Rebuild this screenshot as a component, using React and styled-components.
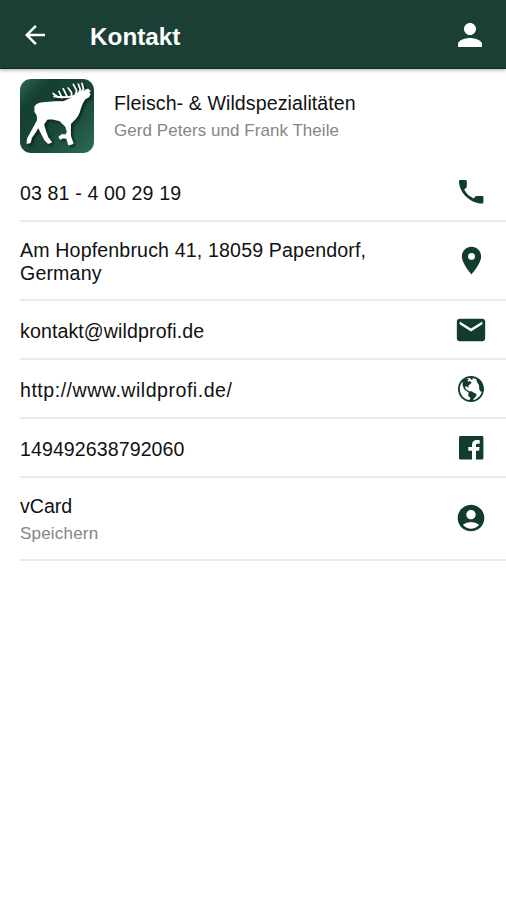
import styled, { createGlobalStyle } from 'styled-components';
import {
  MdArrowBack,
  MdEmail,
  MdAccountCircle,
  MdPerson,
  MdPlace,
} from 'react-icons/md';
import { IoMdGlobe } from 'react-icons/io';

function PhoneIcon() {
  return (
    <svg width="25" height="24" viewBox="0 0 25 24" fill="currentColor">
      <path d="M1.2 0H6.5Q7.8 0 7.8 1.2V6.3Q7.8 7.4 7 8L5.2 9.4C7.6 13.8 10.4 16.4 14.8 18.4L16 16.8Q16.6 15.9 17.8 15.9H23.2Q24.4 15.9 24.4 17V22.4Q24.4 23.5 23.2 23.5C11.5 23.2 .2 13.2 0 1.2Q0 0 1.2 0Z" />
    </svg>
  );
}

function FacebookIcon() {
  return (
    <svg width="25" height="24" viewBox="0 0 25 24" fill="currentColor">
      <path d="M1.4 0H23Q24.4 0 24.4 1.4V22.2Q24.4 23.6 23 23.6H17V14.8H20.1L20.6 11.1H17V9.3C17 8.2 17.5 7.7 18.7 7.7H20.7V4.3C20.1 4.2 19 4.1 17.9 4.1C14.9 4.1 13 5.8 13 8.8V11.1H9.3V14.8H13V23.6H1.4Q0 23.6 0 22.2V1.4Q0 0 1.4 0Z" />
    </svg>
  );
}

const contacts = [
  { label: '03 81 - 4 00 29 19', icon: PhoneIcon, spacing: 0.12 },
  {
    label: 'Am Hopfenbruch 41, 18059 Papendorf, Germany',
    icon: MdPlace,
    size: 33,
    spacing: 0.15,
  },
  { label: 'kontakt@wildprofi.de', icon: MdEmail, size: 34, spacing: 0.1 },
  { label: 'http://www.wildprofi.de/', icon: IoMdGlobe, size: 32, spacing: 0.5 },
  { label: '149492638792060', icon: FacebookIcon, spacing: 0.07 },
  { label: 'vCard', note: 'Speichern', icon: MdAccountCircle, size: 32 },
];

function StagLogo() {
  return (
    <Logo viewBox="0 0 226 222" preserveAspectRatio="none">
      <defs>
        <linearGradient id="badge" x1="0" y1="0" x2="1" y2="1">
          <stop offset="0" stopColor="#2b6b53" />
          <stop offset="0.22" stopColor="#153f30" />
          <stop offset="0.6" stopColor="#1b4938" />
          <stop offset="1" stopColor="#2c6b53" />
        </linearGradient>
        <filter id="shade" x="-20%" y="-20%" width="150%" height="150%">
          <feDropShadow dx="6" dy="5" stdDeviation="4" floodColor="#03140d" floodOpacity="0.7" />
        </filter>
      </defs>
      <rect width="226" height="222" rx="34" fill="url(#badge)" />
      <g filter="url(#shade)" fill="#fff" stroke="#fff" strokeLinejoin="round" strokeLinecap="round">
        <path
          d="M46 84C49 76 59 73 70 72L108 69L135 68C148 64 160 58 170 49C176 40 187 37 195 37L207 31L213 36L208 41L213 46L209 53L198 59C191 66 187 78 183 90C180 103 172 116 161 126L154 133L153 154L154 174L161 193L149 197L143 177L132 175L123 180L120 174L127 168L141 168L145 158L140 142L121 124L94 118L82 120L71 136L78 159L85 177L95 189L86 192L76 182L62 155L56 142L47 158L34 176L31 190L22 192L24 178L32 164L43 144L54 124L53 108L46 98Z"
          strokeWidth="4"
        />
        <path
          d="M178 45C161 57 133 56 104 52M115 54L101 43M128 56L119 37M145 55L132 29M158 53L157 40L147 27M169 48L173 35L163 16M180 44L184 31L178 15M185 42L194 29L189 13"
          fill="none"
          strokeWidth="5"
        />
      </g>
    </Logo>
  );
}

function ContactRow({ label, note, icon: Icon, size, spacing }) {
  return (
    <Row $tall={Boolean(note)}>
      <Texts>
        <Label $spacing={spacing}>{label}</Label>
        {note && <Note $spacing={0.2}>{note}</Note>}
      </Texts>
      <IconSlot>
        <Icon size={size} />
      </IconSlot>
    </Row>
  );
}

function App() {
  return (
    <>
      <GlobalStyle />
      <Toolbar>
        <MdArrowBack size={30} />
        <Title>Kontakt</Title>
        <MdPerson size={36} />
      </Toolbar>
      <Profile>
        <StagLogo />
        <Texts>
          <Label $spacing={0.08}>Fleisch- &amp; Wildspezialitäten</Label>
          <Note $spacing={0.05}>Gerd Peters und Frank Theile</Note>
        </Texts>
      </Profile>
      <List>
        {contacts.map((contact) => (
          <ContactRow key={contact.label} {...contact} />
        ))}
      </List>
    </>
  );
}

const GlobalStyle = createGlobalStyle`
  * {
    box-sizing: border-box;
  }

  body {
    margin: 0;
    background-color: #fff;
    color: #111;
    font-family: 'Liberation Sans', Arial, sans-serif;
  }

  svg {
    flex-shrink: 0;
  }
`;

const Toolbar = styled.header`
  display: flex;
  align-items: center;
  height: 69px;
  padding: 2px 18px 0 20px;
  color: #fff;
  background-color: #1b3f34;
  border-bottom: 1px solid #0c2f24;
  box-shadow: 0 1px 4px rgb(0 0 0 / 35%);
`;

const Title = styled.h1`
  flex: 1;
  margin: 3px 0 0 40px;
  font-size: 24.3px;
  font-weight: bold;
  line-height: 30px;
`;

const Profile = styled.section`
  display: flex;
  align-items: center;
  gap: 20px;
  height: 94px;
  padding: 0 20px;
`;

const Logo = styled.svg`
  width: 74px;
  height: 74px;
`;

const List = styled.ul`
  margin: 0 0 0 20px;
  padding: 0;
  list-style: none;
`;

const Row = styled.li`
  display: flex;
  align-items: center;
  justify-content: space-between;
  min-height: ${({ $tall }) => ($tall ? 83 : 59)}px;
  padding: ${({ $tall }) => ($tall ? '16px 16px 15px 0' : '17px 16px 14px 0')};
  border-bottom: 2px solid #ebebeb;
`;

const Texts = styled.div`
  max-width: 370px;
`;

const Label = styled.div`
  font-size: 19.6px;
  line-height: 23px;
  letter-spacing: ${({ $spacing = 0 }) => $spacing}px;
`;

const Note = styled.div`
  margin-top: 5px;
  color: #858585;
  font-size: 17px;
  line-height: 21px;
  letter-spacing: ${({ $spacing = 0 }) => $spacing}px;
`;

const IconSlot = styled.span`
  display: flex;
  align-items: center;
  justify-content: center;
  width: 38px;
  height: 20px;
  margin-bottom: 3px;
  color: #123c2f;
`;

export default App;
